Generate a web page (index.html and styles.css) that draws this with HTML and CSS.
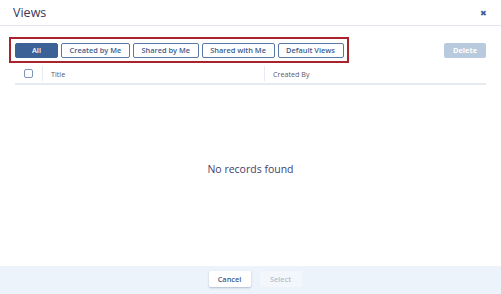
FILE: index.html
```html
<!DOCTYPE html>
<html>
<head>
<meta charset="utf-8">
<link rel="stylesheet" href="styles.css">
</head>
<body>
<div class="dialog">
  <div class="header">
    <span class="title">Views</span>
    <span class="close">&#x2716;</span>
  </div>
  <div class="toolbar">
    <div class="filters">
      <button class="btn active">All</button>
      <button class="btn">Created by Me</button>
      <button class="btn">Shared by Me</button>
      <button class="btn">Shared with Me</button>
      <button class="btn">Default Views</button>
    </div>
    <button class="delete">Delete</button>
  </div>
  <div class="thead">
    <div class="cell check"><span class="box"></span></div>
    <div class="cell col-title">Title</div>
    <div class="cell col-by">Created By</div>
  </div>
  <div class="empty">No records found</div>
  <div class="footer">
    <button class="fbtn cancel">Cancel</button>
    <button class="fbtn select">Select</button>
  </div>
</div>
</body>
</html>
```
FILE: styles.css
```css
* { box-sizing: border-box; }
html, body { margin: 0; padding: 0; background: #fff; }
body { font-family: "Open Sans", "Noto Sans", sans-serif; width: 501px; height: 294px; overflow: hidden; }
.dialog { display: flex; flex-direction: column; height: 294px; }
.header {
  height: 26px; border-bottom: 1px solid #e3e7ed;
  display: flex; align-items: center; justify-content: space-between;
  padding: 0 13px 0 13px;
}
.title { font-size: 12.5px; color: #3a3659; font-weight: 500; margin-top: -1px; }
.close { font-size: 8px; color: #3b5f93; margin-right: 1px; }
.toolbar {
  display: flex; justify-content: space-between; align-items: center;
  padding: 11px 15px 0 9px;
}
.filters {
  display: flex; gap: 3px;
  border: 2px solid #a8232c;
  padding: 4px 3px 3px 4px;
  height: 26px;
}
.btn {
  flex: none;
  height: 15px; padding: 0 7.6px;
  border: 1px solid #5a78a5; background: #fff; border-radius: 2px;
  font-family: inherit; font-size: 7.4px; font-weight: 600; color: #3d5c8c;
  line-height: 13px; white-space: nowrap;
}
.btn.active { background: #3c6197; border-color: #3c6197; color: #fff; width: 43px; }
.delete {
  width: 42px; height: 15px; border: none; border-radius: 2px;
  background: #b8cadd; color: #fff; font-family: inherit; font-size: 7.4px; font-weight: 700;
  padding: 0; margin-top: 0px;
}
.thead {
  margin: 1px 15px 0 15px; height: 21px;
  border-bottom: 2px solid #e6ebf1;
  display: flex; align-items: stretch;
  font-size: 7.2px; color: #5a5a6e;
}
.cell { display: flex; align-items: center; }
.check { width: 28px; justify-content: center; border-right: 1px solid #e6ebf1; margin: 2px 0; padding-right: 1px; }
.box { width: 9px; height: 9px; border: 1px solid #7d95b8; border-radius: 2px; }
.col-title { width: 222px; padding-left: 8px; border-right: 1px solid #e6ebf1; margin: 2px 0; }
.col-by { padding-left: 8px; }
.empty {
  flex: 1; display: flex; align-items: center; justify-content: center;
  font-size: 10.5px; color: #45416a; padding-bottom: 14px;
}
.footer {
  height: 28px; background: #edf3fa;
  display: flex; justify-content: center; align-items: center; gap: 9px;
  padding: 0 0 2px 9px;
}
.fbtn {
  width: 42px; height: 16px; border: none; border-radius: 2px;
  font-family: inherit; font-size: 7.4px; font-weight: 600; padding: 0;
}
.cancel { background: #fff; color: #3d5c8c; box-shadow: 0 1px 2px rgba(40,60,100,0.3); }
.select { background: #f3f7fc; color: #b3bfcf; }
```
